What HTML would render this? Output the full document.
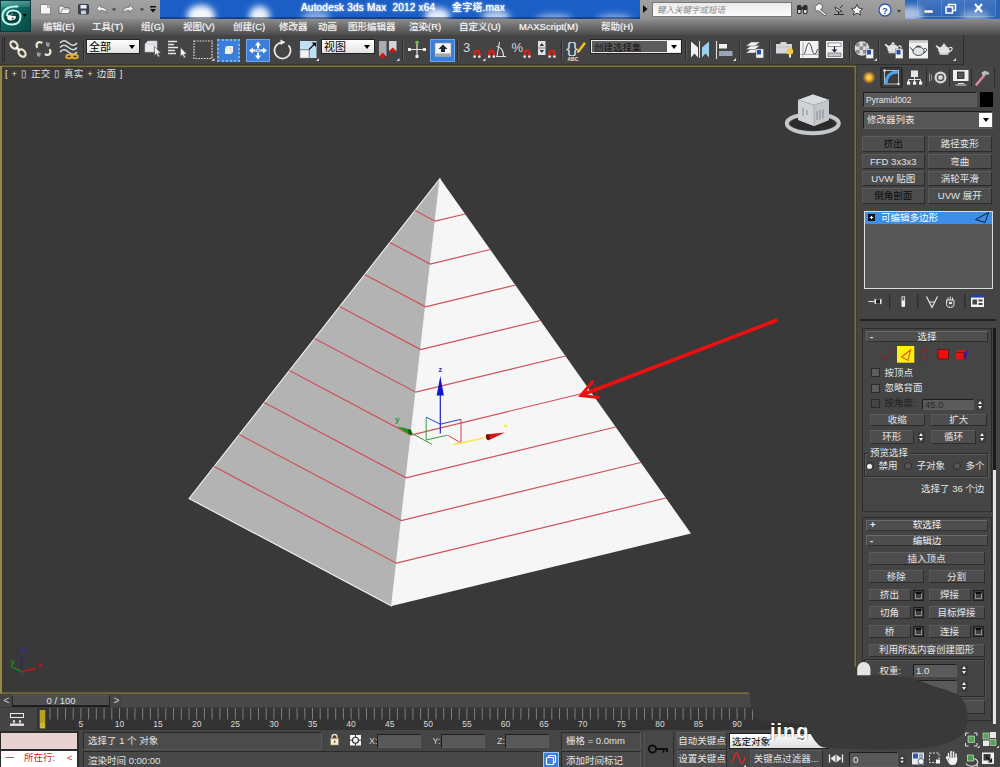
<!DOCTYPE html>
<html lang="zh-CN">
<head>
<meta charset="utf-8">
<title>Autodesk 3ds Max 2012 x64 - 金字塔.max</title>
<style>
*{box-sizing:border-box;margin:0;padding:0}
html,body{width:1000px;height:767px;overflow:hidden;background:#444}
body{position:relative;font-family:"Liberation Sans","Noto Sans CJK SC",sans-serif;font-size:11px;color:#dcdcdc;line-height:1}
.abs{position:absolute}
#app{position:absolute;left:0;top:0;width:1000px;height:767px;overflow:hidden;background:#444}
/* ---------- title ---------- */
#appbtn{left:0;top:0;width:31px;height:32px;background:linear-gradient(135deg,#1f8f89 0%,#0d6561 45%,#084843 100%);border:1px solid #0a3d3a;z-index:2}
#qat{left:31px;top:0;width:129px;height:19px;background:linear-gradient(#a2a2a2,#949494)}
#title{left:160px;top:0;width:480px;height:19px;background:#1b5fc6;overflow:hidden}
#info{left:640px;top:0;width:265px;height:19px;background:linear-gradient(#a0a0a0,#929292)}
#wctl{left:905px;top:0;width:95px;height:19px;background:#2a63b8;overflow:hidden}
.cloud{position:absolute;background:#fff;border-radius:50%;filter:blur(3px)}
#ttext,#ttext2{left:141px;top:3px;white-space:pre;color:#fff;font-size:10px;text-shadow:0 0 3px #cfe2ff,0 0 1px #fff;letter-spacing:.2px}
#ttext2{left:292px}
/* ---------- menu ---------- */
#menu{left:0;top:19px;width:1000px;height:16px;background:linear-gradient(#8d8d8d 0%,#6e6e6e 45%,#4d4d4d 100%)}
#menu span{position:absolute;top:3px;font-size:9.5px;color:#f0f0f0;white-space:nowrap;text-shadow:0 0 1px #ddd}
/* ---------- toolbar ---------- */
#tb{left:0;top:35px;width:964px;height:30px;background:#444;border-right:1px solid #2c2c2c;border-bottom:1px solid #2e2e2e}
.sep{position:absolute;top:6px;width:2px;height:19px;background:#2b2b2b;border-right:1px solid #5a5a5a}
.dd{position:absolute;height:15px;background:#fff;border:1px solid #222;color:#000;font-size:11px;padding:2px 2px 0;line-height:11px;white-space:nowrap;overflow:hidden}
.dd:after{content:"";position:absolute;right:4px;top:5px;border:3.5px solid transparent;border-top:4px solid #000}
.hl{position:absolute;background:#3b7fdb;border:1px solid #6ea6ee}
/* ---------- viewport ---------- */
#vp{left:0;top:65px;width:857px;height:629px;background:#393939;border:2px solid transparent;overflow:hidden}
/* ---------- right panel ---------- */
.btn{position:absolute;background:#4d4d4d;border:1px solid #2c2c2c;border-top-color:#5c5c5c;border-left-color:#585858;color:#e4e4e4;font-size:11px;text-align:center;white-space:nowrap;overflow:hidden}
.fld{position:absolute;background:#5a5a5a;border:1px solid #1e1e1e;border-right-color:#5e5e5e;border-bottom-color:#5e5e5e;color:#e4e4e4;font-size:11px;white-space:nowrap;overflow:hidden}
.hdr{position:absolute;background:#4e4e4e;border:1px solid #303030;border-top-color:#6a6a6a;border-left-color:#666;color:#eee;font-size:11px;text-align:center}
.lbl{position:absolute;white-space:nowrap;color:#e4e4e4;font-size:11px}
.spin{position:absolute;width:7px;height:11px;background:#3b3b3b}
.spin:before{content:"";position:absolute;left:1px;top:1.5px;border:2.5px solid transparent;border-bottom:3px solid #f0f0f0;border-top:0}
.spin:after{content:"";position:absolute;left:1px;bottom:1.5px;border:2.5px solid transparent;border-top:3px solid #f0f0f0;border-bottom:0}
.cb{position:absolute;width:9px;height:9px;background:#5e5e5e;border:1px solid #2a2a2a}
.rd{position:absolute;width:8px;height:8px;border-radius:50%;background:#555;border:1px solid #2a2a2a}
.sq{position:absolute;width:11px;height:11px;border:1px solid #1c1c1c;background:#3e3e3e}
.sq:after{content:"";position:absolute;left:1px;top:1px;right:1px;bottom:1px;border:1px solid #8a8a8a;border-top:2px solid #0c0c0c}
</style>
</head>
<body>
<div id="app">
<div id="appbtn" class="abs">
<div class="abs" style="left:0;top:0;width:29px;height:6px;background:linear-gradient(rgba(255,255,255,.28),rgba(255,255,255,.12))"></div>
<svg class="abs" style="left:-2px;top:-1px" width="31" height="32" viewBox="0 0 31 32"><ellipse cx="13" cy="17" rx="7" ry="6" fill="#083f3b"/><path d="M18.500 6.500C12 6 4 8 3.500 15.500 3 22 8 24.500 13 24.500c5.500 0 8.500-3 8.500-8 0-4-3.500-6-7.500-6-3.500 0-6 2-6 5" fill="none" stroke="#c9f5ef" stroke-width="2" stroke-linecap="round"/><ellipse cx="12.500" cy="17.300" rx="4.400" ry="3.100" fill="#f2fbfa" transform="rotate(-12 12.500 17.300)"/><ellipse cx="13.800" cy="14.300" rx="3.600" ry="1.700" fill="#0a4a46" transform="rotate(8 13.800 14.300)"/><circle cx="13" cy="14.100" r=".8" fill="#9fdcd5"/><circle cx="13.700" cy="18.400" r=".9" fill="#3a3a3a"/><path d="M23.500 14h4.500l-2.250 2.800z" fill="#000"/></svg>
</div>
<div id="qat" class="abs">
<svg width="129" height="19" viewBox="0 0 129 19">
<path d="M9.500 4.500h7l3 3v6.500h-10z" fill="#f4f4f4" stroke="#777" stroke-width=".8"/><path d="M16.500 4.500v3h3" fill="#ddd" stroke="#888" stroke-width=".6"/>
<path d="M28 6h4l1 1.500h5v6h-10z" fill="#e8e8e8" stroke="#666" stroke-width=".8"/><path d="M29.500 13.500l2-4.500h8l-2 4.500z" fill="#fafafa" stroke="#666" stroke-width=".7"/>
<rect x="47.500" y="4.500" width="10" height="9.500" rx="1" fill="#3c4657" stroke="#2a3140" stroke-width=".8"/><rect x="49.500" y="5" width="6" height="3.500" fill="#eef1f6"/><rect x="50" y="10.500" width="5" height="3.500" fill="#c9d0dc"/>
<path d="M65.500 8.500l4-3.500v2.200c4 0 6.500 2 6.500 6-1.200-2.300-3.200-3-6.500-3v2z" fill="#f1f1f1" stroke="#666" stroke-width=".7"/>
<path d="M81 8.500h4l-2 2.500z" fill="#333"/>
<path d="M102.500 8.500l-4-3.500v2.200c-4 0-6.500 2-6.500 6 1.200-2.300 3.200-3 6.500-3v2z" fill="#f1f1f1" stroke="#666" stroke-width=".7"/>
<path d="M109 8.500h4l-2 2.500z" fill="#333"/>
<rect x="119" y="6" width="6" height="1.500" fill="#111"/><path d="M119 9h6l-3 3.500z" fill="#111"/>
</svg>
</div>
<div id="title" class="abs">
<div class="cloud" style="left:27px;top:5px;width:28px;height:22px;opacity:.95"></div>
<div class="cloud" style="left:89px;top:6px;width:21px;height:20px;opacity:.92"></div>
<div class="cloud" style="left:142px;top:11px;width:28px;height:14px;opacity:.5"></div>
<div class="cloud" style="left:265px;top:8px;width:25px;height:16px;opacity:.9"></div>
<div class="cloud" style="left:322px;top:10px;width:28px;height:14px;opacity:.7"></div>
<div class="cloud" style="left:376px;top:14px;width:36px;height:10px;opacity:.5"></div>
<div class="cloud" style="left:437px;top:14px;width:35px;height:10px;opacity:.45"></div>
<div class="abs" style="left:0;top:17px;width:480px;height:2px;background:rgba(10,30,70,.45)"></div>
<div id="ttext" class="abs">Autodesk 3ds Max  2012 x64</div><div id="ttext2" class="abs">金字塔.max</div>
</div>
<div id="info" class="abs">
<svg class="abs" style="left:3px;top:5px" width="6" height="8"><path d="M0 0l4.500 4-4.500 4z" fill="#111"/></svg>
<div class="abs" style="left:12px;top:2px;width:140px;height:15px;background:linear-gradient(#e9e9e9,#fdfdfd);border:1px solid #777;color:#8a8a8a;font-size:8.500px;font-style:italic;padding:3px 4px;white-space:nowrap">键入关键字或短语</div>
<svg class="abs" style="left:154px;top:1px" width="111" height="18" viewBox="0 0 111 18">
<g fill="#2b2b2b"><rect x="3" y="4" width="4.500" height="9" rx="1.500"/><rect x="9" y="4" width="4.500" height="9" rx="1.500"/><rect x="6.500" y="6" width="3.500" height="2.500"/></g><rect x="4" y="9" width="2.500" height="3" fill="#ddd"/><rect x="10" y="9" width="2.500" height="3" fill="#ddd"/>
<path d="M23 4a3 3 0 1 1 3.500 4.500l6 5-1.500 1.500-6-5a3 3 0 0 1-2-6z" fill="#f4f4f4" stroke="#444" stroke-width=".8"/>
<path d="M40 13.500h10M45 13.500l-1-4M41 6a5 5 0 0 0 7 4.500zM46 7l3-3" fill="#eee" stroke="#333" stroke-width="1"/>
<path d="M63 3.500l1.700 3.600 3.900.4-2.900 2.700.8 3.900-3.500-2-3.500 2 .8-3.900-2.900-2.700 3.900-.4z" fill="#f5f5f5" stroke="#333" stroke-width=".9"/>
<circle cx="91" cy="9" r="6" fill="#fff" stroke="#2b58b0" stroke-width="1.300"/><text x="91" y="12.500" font-size="9.500" font-weight="bold" fill="#2b58b0" text-anchor="middle" font-family="Liberation Sans, sans-serif">?</text>
<path d="M103 9h4l-2 2.500z" fill="#333"/>
</svg>
</div>
<div id="wctl" class="abs">
<div class="cloud" style="left:-8px;top:6px;width:26px;height:16px;opacity:.6"></div>
<div class="cloud" style="left:55px;top:11px;width:30px;height:10px;opacity:.45"></div>
<div class="abs" style="left:12px;top:0;width:79px;height:17px;border:1px solid rgba(255,255,255,.15);border-top:0;border-radius:0 0 3px 3px;background:linear-gradient(rgba(255,255,255,.12),rgba(255,255,255,.02))"></div>
<div class="abs" style="left:36px;top:0;width:1px;height:16px;background:rgba(255,255,255,.15)"></div>
<div class="abs" style="left:59px;top:0;width:1px;height:16px;background:rgba(255,255,255,.15)"></div>
<svg class="abs" style="left:0;top:0" width="95" height="19" viewBox="0 0 95 19"><rect x="19" y="10" width="9" height="3" fill="#fff" stroke="#456" stroke-width=".5"/><rect x="43.500" y="4.500" width="7" height="6" fill="none" stroke="#fff" stroke-width="1.500"/><rect x="41" y="7" width="6.500" height="6" fill="#3c6cb4" stroke="#fff" stroke-width="1.500"/><path d="M70 4l7 8M77 4l-7 8" stroke="#fff" stroke-width="2.200"/></svg>
</div>

<div id="menu" class="abs">
<span style="left:43px">编辑(E)</span><span style="left:92px">工具(T)</span><span style="left:141px">组(G)</span><span style="left:183px">视图(V)</span><span style="left:233px">创建(C)</span><span style="left:279px">修改器</span><span style="left:318px">动画</span><span style="left:348px">图形编辑器</span><span style="left:409px">渲染(R)</span><span style="left:459px">自定义(U)</span><span style="left:519px">MAXScript(M)</span><span style="left:601px">帮助(H)</span>
</div>

<div id="tb" class="abs">
<div class="abs" style="left:2px;top:2px;width:1px;height:25px;background:#2a2a2a"></div><div class="abs" style="left:4px;top:2px;width:1px;height:25px;background:#2a2a2a"></div>
<div class="sep" style="left:83px"></div><div class="sep" style="left:402px"></div><div class="sep" style="left:457px"></div><div class="sep" style="left:561px"></div><div class="sep" style="left:685px"></div><div class="sep" style="left:739px"></div><div class="sep" style="left:769px"></div><div class="sep" style="left:849px"></div><div class="sep" style="left:878px"></div>
<div class="hl" style="left:217px;top:4px;width:23px;height:23px;border:2px dotted #7fb0f0"></div>
<div class="hl" style="left:246px;top:4px;width:24px;height:23px"></div>
<div class="hl" style="left:430px;top:4px;width:25px;height:23px"></div>
<div class="dd" style="left:86px;top:4px;width:54px;background:linear-gradient(#fff,#e2e2e2)">全部</div>
<div class="dd" style="left:321px;top:4px;width:54px;background:linear-gradient(#fff,#e2e2e2)">视图</div>
<div class="dd" style="left:590px;top:4px;width:92px;background:#5c5c5c;box-shadow:inset 0 0 0 1px #e8e8e8;color:#111;padding-left:3px;font-size:9.500px;padding-top:2px">创建选择集<div class="abs" style="right:1px;top:1px;width:13px;height:11px;background:#fff"></div></div>
<svg class="abs" style="left:0;top:0" width="963" height="30" viewBox="0 35 963 30">
<!-- link -->
<g fill="none" stroke="#ece6cb" stroke-width="2.200"><ellipse cx="14" cy="45" rx="3" ry="4.200" transform="rotate(-42 14 45)"/><ellipse cx="22" cy="53" rx="3" ry="4.200" transform="rotate(-42 22 53)"/></g><path d="M16 47l4 4" stroke="#fff" stroke-width="2"/>
<!-- unlink -->
<g fill="none" stroke="#ece6cb" stroke-width="2.200" stroke-linecap="round"><path d="M37 47c-1.500-3 1-6 4.500-4.500"/><path d="M50 50c1.500 3-1 6-4.500 4.500"/></g><path d="M46 42l4 1-1 4-3-1zM37 52l4 1-1 4-3-1z" fill="#999"/>
<!-- bind -->
<g fill="none" stroke="#d8dcdc" stroke-width="1.600"><path d="M60 43c2.500-3 5-3 8.500 0s6 3 8.500 0"/><path d="M60 47.500c2.500-3 5-3 8.500 0s6 3 8.500 0"/><path d="M60 52c2.500-3 5-3 8.500 0s6 3 8.500 0"/></g><g fill="none" stroke="#f0b21a" stroke-width="1.800"><ellipse cx="69" cy="56.500" rx="2.800" ry="1.800"/><ellipse cx="75" cy="56.500" rx="2.800" ry="1.800"/></g>
<!-- select object -->
<path d="M145 44l3-3h9v8l-3 3h-9z" fill="#e9e9f0" stroke="#bbb" stroke-width=".6"/><path d="M145 44h9v8M154 44l3-3" fill="none" stroke="#c8c8d4" stroke-width=".8"/><path d="M154.500 46.500v9l2-1.800 1.600 3.300 1.500-.7-1.600-3.200h2.800z" fill="#f2f2f2" stroke="#555" stroke-width=".6"/>
<!-- select by name -->
<g stroke="#e6e6e6" stroke-width="1.300"><path d="M168 41.500h9M168 44.500h6M168 47.500h10M168 50.500h7M168 53.500h8"/></g><path d="M180.500 47.500v9l2-1.800 1.600 3.300 1.500-.7-1.600-3.200h2.800z" fill="#f2f2f2" stroke="#555" stroke-width=".6"/>
<!-- rect region -->
<rect x="194" y="41" width="18" height="17.500" fill="none" stroke="#e4e4e4" stroke-width="1.200" stroke-dasharray="1.600 1.200"/><path d="M214.500 58l-3 3h3z" fill="#ddd"/>
<!-- window crossing -->
<path d="M225 48l2-2h6v6l-2 2h-6z" fill="#f1f1ea"/><path d="M225 48h6v6" fill="none" stroke="#cfcfc4" stroke-width=".7"/>
<!-- move -->
<g fill="#fff"><path d="M258 41.500l3 4h-2v2.500h-2v-2.500h-2z"/><path d="M258 59.500l3-4h-2v-2.500h-2v2.500h-2z"/><path d="M249 50.500l4-3v2h2.500v2H253v2z"/><path d="M267 50.500l-4-3v2h-2.500v2H263v2z"/></g><circle cx="258" cy="50.500" r="1.600" fill="none" stroke="#fff" stroke-width="1"/>
<!-- rotate -->
<path d="M282.500 42.500a8 8 0 1 0 6 2.700" fill="none" stroke="#ececec" stroke-width="1.700"/><path d="M280.500 39.500l5 2.800-5 2.800z" fill="#ececec"/>
<!-- scale -->
<rect x="300" y="41" width="16.500" height="17" fill="#bfe0f4"/><rect x="300" y="50" width="9" height="8" fill="#f4f4f4" stroke="#889" stroke-width=".6"/><path d="M300 49.500h9.500V58" fill="none" stroke="#7a8a98" stroke-width=".8"/><path d="M309 49.500l6-6" stroke="#111" stroke-width="1.300"/><path d="M316 42.500v4.500l-4.500-4.500z" fill="#111"/><path d="M319 58l-3 3h3z" fill="#ddd"/>
<!-- pivot -->
<rect x="379" y="41" width="7.500" height="15" fill="#a9adb3"/><rect x="389" y="41" width="7.500" height="10" fill="#d4d4d8"/><path d="M379 56.500l3.700-4 3.700 4-3.700 2z" fill="#d01818"/><path d="M389 51l3.700-3.500 3.700 3.500-3.700 2z" fill="#d01818"/><path d="M399.500 58l-3 3h3z" fill="#ddd"/>
<!-- manipulate -->
<path d="M409 49.500h16M417 42v15" stroke="#e6e6e6" stroke-width="1.200"/><rect x="408" y="48" width="3" height="3" fill="#f0f0f0"/><rect x="423" y="48" width="3" height="3" fill="#f0f0f0"/><rect x="415.500" y="55" width="3" height="3" fill="#f0f0f0"/><circle cx="417" cy="42.500" r="1.800" fill="#6cc24a"/>
<!-- kbd override -->
<rect x="435" y="43" width="16" height="13.500" fill="#f3f3f3" stroke="#889" stroke-width=".5"/><rect x="435.500" y="53.500" width="15" height="2.500" fill="#a6a6a6"/><path d="M443 44.500l4.500 4.500h-2.500v3h-4v-3h-2.500z" fill="#1d2a3a"/>
<!-- snaps -->
<text x="463" y="51.500" font-size="13" fill="#d6d6d6" font-family="Liberation Sans, sans-serif">3</text>
<g id="mag"><path d="M473.500 57.500v-4.500a3.500 3.500 0 0 1 7 0v4.500h-2.300v-4.500a1.200 1.200 0 0 0-2.400 0v4.500z" fill="#e01b1b"/><rect x="473.500" y="55.500" width="2.300" height="2.200" fill="#f1f1f1"/><rect x="478.200" y="55.500" width="2.300" height="2.200" fill="#f1f1f1"/></g><path d="M485.500 58l-3 3h3z" fill="#ddd"/>
<g transform="translate(14.500 0)"><path d="M473.500 57.500v-4.500a3.500 3.500 0 0 1 7 0v4.500h-2.300v-4.500a1.200 1.200 0 0 0-2.400 0v4.500z" fill="#e01b1b"/><rect x="473.500" y="55.500" width="2.300" height="2.200" fill="#f1f1f1"/><rect x="478.200" y="55.500" width="2.300" height="2.200" fill="#f1f1f1"/></g><path d="M496 56.500h10M497 56l2.500-14M496.500 46.500c4 0 7 4 7 9.500" fill="none" stroke="#e2e2e2" stroke-width="1.100"/>
<text x="511.500" y="51.500" font-size="13" fill="#d6d6d6" font-family="Liberation Sans, sans-serif">%</text><g transform="translate(50 0)"><path d="M473.500 57.500v-4.500a3.500 3.500 0 0 1 7 0v4.500h-2.300v-4.500a1.200 1.200 0 0 0-2.400 0v4.500z" fill="#e01b1b"/><rect x="473.500" y="55.500" width="2.300" height="2.200" fill="#f1f1f1"/><rect x="478.200" y="55.500" width="2.300" height="2.200" fill="#f1f1f1"/></g>
<rect x="538" y="41" width="7.500" height="14" fill="#dfe3e6"/><path d="M539.500 46l2.300-3 2.300 3zM539.500 50l2.300 3 2.300-3z" fill="#333"/><rect x="538" y="47.300" width="7.500" height="1.400" fill="#999"/><g transform="translate(75 0)"><path d="M473.500 57.500v-4.500a3.500 3.500 0 0 1 7 0v4.500h-2.300v-4.500a1.200 1.200 0 0 0-2.400 0v4.500z" fill="#e01b1b"/><rect x="473.500" y="55.500" width="2.300" height="2.200" fill="#f1f1f1"/><rect x="478.200" y="55.500" width="2.300" height="2.200" fill="#f1f1f1"/></g>
<!-- named sel -->
<text x="566" y="53" font-size="14" fill="#dedede" font-family="Liberation Sans, sans-serif" textLength="12" lengthAdjust="spacingAndGlyphs">{}</text><text x="567.500" y="60.500" font-size="5" font-weight="bold" fill="#e8e8e8" font-family="Liberation Sans, sans-serif">ABC</text><path d="M577 53l1-3 6-8 2 1.500-6 8z" fill="#f0c020"/><path d="M577 53l1-3 2 1.500z" fill="#f6e6b0"/>
<!-- mirror -->
<path d="M691 41.500l7 6v10l-3.500-4-3.500 4z" fill="#f1f1f1"/><path d="M699.500 41v17" stroke="#ddd" stroke-width="1"/><path d="M709 41.500l-7 6v10l3.500-4 3.500 4z" fill="#9dd0f2"/>
<!-- align -->
<path d="M716.500 41v18" stroke="#d8d8d8" stroke-width="1.200"/><rect x="719" y="44" width="8" height="4.500" fill="#f0f0f0"/><rect x="719" y="51" width="13.500" height="5" fill="#9aa6bb"/><path d="M736 58l-3 3h3z" fill="#ddd"/>
<!-- layers -->
<g fill="#f1f1f1" stroke="#555" stroke-width=".5"><path d="M746 53l5-4h9l-5 4z"/><path d="M746 49.500l5-4h9l-5 4z"/><path d="M746 46l5-4h9l-5 4z"/></g><rect x="756" y="49" width="7.500" height="9" fill="#f2f2f2" stroke="#666" stroke-width=".5"/><rect x="757" y="50" width="4" height="4.500" fill="#2b4fa8"/>
<!-- graphite -->
<path d="M776 44h4l1-2h5l1 2h5v9.500h-16z" fill="#d6d6dc"/><path d="M776 47h16" stroke="#bbb" stroke-width=".6"/><circle cx="790" cy="51.500" r="3.200" fill="#f6c93a"/><rect x="789" y="54.500" width="2" height="3" fill="#eee"/>
<!-- curve editor -->
<rect x="800" y="41" width="18.500" height="17" fill="#f2f2f2"/><path d="M803 42v15M800.500 54.500h17.500" stroke="#889" stroke-width=".7"/><path d="M804 54c2-1 2.500-11 5-11s3 11 5.500 11 2-4 3.500-5" fill="none" stroke="#445" stroke-width="1"/>
<!-- schematic -->
<rect x="826" y="41" width="17" height="17" fill="#f0f0f0"/><rect x="828" y="43" width="13" height="3.500" fill="#fff" stroke="#667" stroke-width=".7"/><rect x="828" y="53" width="13" height="3.500" fill="#c5c5c5" stroke="#667" stroke-width=".7"/><path d="M834.500 46.500v3.500" stroke="#223" stroke-width="1.200"/><path d="M831.500 49.500h6l-3 3z" fill="#223"/>
<!-- material -->
<circle cx="862" cy="48.500" r="7.300" fill="#d9d9d9"/><g fill="#8a8a8a"><rect x="856" y="43" width="3.500" height="3.500"/><rect x="863" y="43" width="3.500" height="3.500"/><rect x="859.500" y="46.500" width="3.500" height="3.500"/><rect x="856" y="50" width="3.500" height="3.500"/><rect x="863" y="50" width="3.500" height="3.500"/></g><rect x="866" y="49" width="7.500" height="9.500" fill="#f2f2f2" stroke="#666" stroke-width=".5"/><rect x="867" y="50" width="4" height="4.500" fill="#2b4fa8"/><path d="M877 58l-3 3h3z" fill="#ddd"/>
<!-- render setup -->
<g id="tp"><ellipse cx="893" cy="48.700" rx="5.600" ry="4.300" fill="#e4e4e4"/><rect x="888.500" y="51.500" width="9" height="1.800" fill="#d0d0d0"/><path d="M888 48.500l-3.500-4 1.200-.8 3.800 2.800z" fill="#e4e4e4"/><path d="M898.200 46.500c2.600-1.600 3.800.6 2.400 2.300l-2.600 2" fill="none" stroke="#e4e4e4" stroke-width="1.100"/><path d="M890.800 44.600h4.400l-.8-1.300h-2.800zM892.300 43.300h1.400v-1.200h-1.400z" fill="#e4e4e4"/></g><rect x="895.500" y="49" width="7.500" height="9.500" fill="#f2f2f2" stroke="#666" stroke-width=".5"/><rect x="896.500" y="50" width="4" height="4.500" fill="#2b4fa8"/>
<!-- frame window -->
<rect x="909" y="40.500" width="19" height="18" fill="#f1f1f1"/><rect x="909" y="40.500" width="19" height="2.500" fill="#d0d0d0"/><g transform="translate(25.500 2.500)"><ellipse cx="893" cy="48.700" rx="5.600" ry="4.300" fill="#dfe3e6" stroke="#334" stroke-width=".9"/><path d="M888 48.500l-3.500-3.800M898.200 46.500c2.600-1.600 3.800.6 2.400 2.300l-2.600 2" fill="none" stroke="#334" stroke-width="1"/><path d="M890.800 44.400h4.400v-1.200h-4.400z" fill="#334"/></g>
<!-- render -->
<g transform="translate(51 1.500)"><ellipse cx="893" cy="48.700" rx="5.600" ry="4.300" fill="#e4e4e4"/><rect x="888.500" y="51.500" width="9" height="1.800" fill="#d0d0d0"/><path d="M888 48.500l-3.500-4 1.200-.8 3.800 2.800z" fill="#e4e4e4"/><path d="M898.200 46.500c2.600-1.600 3.800.6 2.400 2.300l-2.600 2" fill="none" stroke="#e4e4e4" stroke-width="1.100"/><path d="M890.800 44.600h4.400l-.8-1.300h-2.800zM892.300 43.300h1.400v-1.200h-1.400z" fill="#e4e4e4"/></g><path d="M956 58l-3 3h3z" fill="#ddd"/>
</svg>
</div>

<div id="vp" class="abs">
<svg class="abs" style="left:0;top:0" width="853" height="625" viewBox="2 67 853 625">
<defs><linearGradient id="lf" x1="0" y1="0" x2="0" y2="1"><stop offset="0" stop-color="#b0b0b0"/><stop offset="1" stop-color="#bcbcbc"/></linearGradient></defs>
<path d="M440 178.5L189 498.5L391.6 606z" fill="#b3b3b3" stroke="#f4f4f4" stroke-width="1.100" stroke-linejoin="round"/>
<path d="M440 178.5L391.6 606L691 533.5z" fill="#f6f6f6"/>
<path d="M414.9 210.5L435.2 221.2L465.1 214.0M389.8 242.5L430.3 264.0L490.2 249.5M364.7 274.5L425.5 306.8L515.3 285.0M339.6 306.5L420.6 349.5L540.4 320.5M314.5 338.5L415.8 392.2L565.5 356.0M289.4 370.5L411.0 435.0L590.6 391.5M264.3 402.5L406.1 477.8L615.7 427.0M239.2 434.5L401.3 520.5L640.8 462.5M214.1 466.5L396.4 563.2L665.9 498.0" fill="none" stroke="#cf5058" stroke-width="1.200"/>
<!-- gizmo -->
<path d="M411.500 433.200L431.700 444.200" stroke="#2f9a2f" stroke-width="1"/>
<path d="M426.200 417.200V440L446 435.500" fill="none" stroke="#3a9a3a" stroke-width="1"/>
<path d="M446 435.500h2.200" stroke="#999" stroke-width="1"/>
<path d="M426.200 417.200L440.300 424.200L461 419.300" fill="none" stroke="#2a3fd0" stroke-width="1"/>
<path d="M461 419.300V443L448.200 435.500" fill="none" stroke="#e03a3a" stroke-width="1"/>
<path d="M453.500 444.500L461 443L485.500 437.700" fill="none" stroke="#f4e84a" stroke-width="1.300"/>
<path d="M440.300 395V433.500" stroke="#1c28c8" stroke-width="1.200"/>
<path d="M440.300 376l3.600 19.500h-7.200z" fill="#1418c8"/>
<path d="M397 426.200l13.600 3.200-1.400 5.200z" fill="#169a16"/><ellipse cx="410" cy="432" rx="1.800" ry="2.800" fill="#0b5e0b" transform="rotate(-20 410 432)"/>
<path d="M505 432.400l-17.600 1.800 1.200 6z" fill="#d81414"/><ellipse cx="487.800" cy="437.200" rx="1.800" ry="3" fill="#7a0a0a" transform="rotate(-12 487.800 437.200)"/>
<text x="438.500" y="371.500" font-size="7" font-weight="bold" fill="#2a32c8" font-family="Liberation Sans, sans-serif">z</text>
<text x="395" y="421.500" font-size="8" font-weight="bold" fill="#2a9a2a" font-family="Liberation Sans, sans-serif">y</text>
<circle cx="505.700" cy="426" r="1.700" fill="#f2ee5a"/>
<!-- annotation arrow -->
<path d="M776 320.500L583 394.500" stroke="#ee1010" stroke-width="3.600" stroke-linecap="round"/>
<path d="M592.500 381.500L581 395.500L598.500 397.500" fill="none" stroke="#ee1010" stroke-width="3" stroke-linejoin="miter" stroke-linecap="round"/><path d="M592.500 381.500L598.500 397.500" stroke="#ee1010" stroke-width="1.200" opacity=".7"/>
<!-- viewcube -->
<ellipse cx="812.800" cy="123.600" rx="26" ry="9.700" fill="none" stroke="#c4c8cb" stroke-width="4"/>
<ellipse cx="812.800" cy="123.600" rx="22" ry="7" fill="#2b2b2b"/>
<path d="M798 100l15-5.500 16 5.500v20l-15 6-15-6z" fill="#c9cdd1"/>
<path d="M798 100l15-5.500 16 5.500-15 5z" fill="#d9dcdf"/><path d="M814 105v21l15-6v-20z" fill="#c3c7cb"/><path d="M798 100l16 5v21l-16-6z" fill="#cfd3d6"/>
<path d="M798 100l16 5 15-5M814 105v21" fill="none" stroke="#9a9ea3" stroke-width=".7"/>
<path d="M817 111v9M820 110v9.500M823 109.500v9M803 108v8M807 110v5" stroke="#7f858c" stroke-width=".9"/>
<!-- tripod -->
<path d="M21.600 671.400V656" stroke="#1c22c0" stroke-width="1.300"/><path d="M21.600 671.400L36 668.500" stroke="#d01414" stroke-width="1.300"/><path d="M21.600 671.400L11 666.500" stroke="#1f8a1f" stroke-width="1.300"/><path d="M21.600 671.400l1 4" stroke="#2a6a2a" stroke-width="1"/>
<text x="22" y="652" font-size="8" font-weight="bold" fill="#2a2ec0" font-family="Liberation Sans, sans-serif">z</text>
<text x="37.500" y="666.500" font-size="8" font-weight="bold" fill="#c81414" font-family="Liberation Sans, sans-serif">x</text>
<text x="10.500" y="663.500" font-size="8" font-weight="bold" fill="#228a22" font-family="Liberation Sans, sans-serif">y</text>
</svg>
<div id="vlabel" class="abs" style="left:3px;top:2px;font-size:9.500px;color:#e2e2e2;white-space:pre;letter-spacing:.2px;word-spacing:.9px">[ + ▯ 正交 ▯ 真实 + 边面 ]</div>
</div>

<svg class="abs" style="left:0;top:62px;width:860px;height:636px" viewBox="0 62 860 636">
<rect x="1" y="66.300" width="854.300" height="626.800" fill="none" stroke="#423d28" stroke-width="4.200" opacity=".85"/>
<rect x="1" y="66.300" width="854.300" height="626.800" fill="none" stroke="#80764d" stroke-width="1.300"/>
<path d="M1 66v627.500" stroke="#96884a" stroke-width="2"/>
</svg>
<!--PANEL_START-->
<div class="abs" style="left:857px;top:65px;width:143px;height:702px;background:#444"></div>
<div class="abs" style="left:859px;top:67px;width:136px;height:21px;background:#464646"></div>
<div class="abs" style="left:880px;top:68px;width:1px;height:19px;background:#2c2c2c"></div>
<div class="abs" style="left:902px;top:68px;width:1px;height:19px;background:#2c2c2c"></div>
<div class="abs" style="left:925.5px;top:68px;width:1px;height:19px;background:#2c2c2c"></div>
<div class="abs" style="left:948.5px;top:68px;width:1px;height:19px;background:#2c2c2c"></div>
<div class="abs" style="left:970.5px;top:68px;width:1px;height:19px;background:#2c2c2c"></div>
<div class="abs" style="left:993.5px;top:68px;width:1px;height:19px;background:#2c2c2c"></div>
<div class="abs" style="left:881px;top:67px;width:21px;height:21px;background:#3c3c3c;border:1px solid #2a2a2a"></div>
<svg class="abs" style="left:857px;top:65px" width="143" height="26" viewBox="857 65 143 26">
<defs><radialGradient id="sun"><stop offset="0" stop-color="#fff2a0"/><stop offset=".45" stop-color="#f5a623"/><stop offset="1" stop-color="#f5a623" stop-opacity="0"/></radialGradient></defs>
<circle cx="869" cy="77.500" r="6.500" fill="url(#sun)"/>
<rect x="884.500" y="70.500" width="14" height="13.500" fill="none" stroke="#e0e0e0" stroke-width=".8"/><path d="M886 84c0-7 4-12 12-12" fill="none" stroke="#4aa3ee" stroke-width="3.200"/><rect x="883.500" y="69.500" width="2" height="2" fill="#f0f0f0"/><rect x="897.500" y="83" width="2" height="2" fill="#f0f0f0"/>
<rect x="911" y="70.500" width="7" height="6.500" fill="#e8e8e8"/><path d="M914.500 77v2.500M908.500 82v-2.500h12V82M914.500 79.500V82" fill="none" stroke="#e0e0e0" stroke-width="1"/><rect x="907" y="81.500" width="3.200" height="3.200" fill="#f2f2f2"/><rect x="913" y="81.500" width="3.200" height="3.200" fill="#f2f2f2"/><rect x="919" y="81.500" width="3.200" height="3.200" fill="#f2f2f2"/>
<circle cx="940.500" cy="77.500" r="6" fill="#d6d6d6"/><circle cx="940.500" cy="77.500" r="3.800" fill="#555"/><circle cx="940.500" cy="77.500" r="2.300" fill="#e0e0e0"/><path d="M929.500 73.500v8M931.500 74.500v6" stroke="#b0b0b0" stroke-width=".7"/>
<rect x="953" y="70" width="15.500" height="11" fill="#f0f0f0"/><rect x="957.500" y="72" width="6.500" height="6.500" fill="#555" stroke="#222" stroke-width=".8"/><path d="M958 83.500h6M955.500 85h11" stroke="#ddd" stroke-width="1"/>
<path d="M976.500 84.500l8-9.500" stroke="#d8899a" stroke-width="2.600" stroke-linecap="round"/><path d="M981.500 72.500c3-2.500 6-2 8 1l-2 1.500c-1-1-2-1-3 0l-1.500 1.200z" fill="#b8c0c4"/>
</svg>
<div class="fld" style="left:863px;top:92px;width:114px;height:15px;padding:2px 2px;font-size:8.500px;line-height:10px">Pyramid002</div>
<div class="abs" style="left:980px;top:92px;width:13px;height:15px;background:#000"></div>
<div class="fld" style="left:863px;top:111px;width:130px;height:18px;padding:3px 3px;font-size:9.500px;background:#575757">修改器列表<div class="abs" style="right:0;top:1px;width:13px;height:14px;background:#fff"></div><div class="abs" style="right:3px;top:6px;border:3.500px solid transparent;border-top:4px solid #000"></div></div>
<div class="btn" style="left:861.5px;top:136px;width:63.5px;height:15.5px;line-height:13.5px;font-size:9.5px;color:#0c0c0c;">挤出</div>
<div class="btn" style="left:927.5px;top:136px;width:64.5px;height:15.5px;line-height:13.5px;font-size:9.5px;">路径变形</div>
<div class="btn" style="left:861.5px;top:153.5px;width:63.5px;height:15.5px;line-height:13.5px;font-size:9.5px;">FFD 3x3x3</div>
<div class="btn" style="left:927.5px;top:153.5px;width:64.5px;height:15.5px;line-height:13.5px;font-size:9.5px;">弯曲</div>
<div class="btn" style="left:861.5px;top:170.5px;width:63.5px;height:15.5px;line-height:13.5px;font-size:9.5px;">UVW 贴图</div>
<div class="btn" style="left:927.5px;top:170.5px;width:64.5px;height:15.5px;line-height:13.5px;font-size:9.5px;">涡轮平滑</div>
<div class="btn" style="left:861.5px;top:188px;width:63.5px;height:15.5px;line-height:13.5px;font-size:9.5px;color:#0c0c0c;">倒角剖面</div>
<div class="btn" style="left:927.5px;top:188px;width:64.5px;height:15.5px;line-height:13.5px;font-size:9.5px;">UVW 展开</div>
<div class="abs" style="left:863.500px;top:210.500px;width:129px;height:78px;background:#565656;border:1px solid #dcdcdc"></div>
<div class="abs" style="left:864.500px;top:211.500px;width:127px;height:12.500px;background:#3c8ee8"></div>
<div class="abs" style="left:867.500px;top:214px;width:7px;height:7px;background:#152033;border:1px solid #0a0a0a"></div><div class="abs" style="left:869.500px;top:217px;width:3px;height:1px;background:#fff"></div><div class="abs" style="left:870.500px;top:216px;width:1px;height:3px;background:#fff"></div>
<div class="lbl" style="left:881px;top:213px;color:#fff;font-size:9.500px">可编辑多边形</div>
<svg class="abs" style="left:974px;top:211px" width="17" height="13" viewBox="0 0 17 13"><path d="M1.500 8.500L14.500 1.500L11 11.500z" fill="none" stroke="#0c1830" stroke-width="1"/></svg>
<svg class="abs" style="left:857px;top:290px" width="143" height="24" viewBox="857 290 143 24">
<path d="M889.700 294v15M917.700 294v15M964.800 294v15" stroke="#2a2a2a" stroke-width="1.200"/>
<path d="M868.500 301.500h6" stroke="#e8e8e8" stroke-width="1"/><path d="M874.500 298.500l1.500 1h4l1.500-1v6l-1.500-1h-4l-1.500 1z" fill="#f0f0f0"/><rect x="876" y="299.500" width="4" height="4" fill="#222"/>
<rect x="901.500" y="296" width="3.600" height="11" rx="1.200" fill="#f2f2f2"/><rect x="902.300" y="296.500" width="2" height="4" fill="#666"/>
<path d="M926.500 296.500l5.500 11 5.500-11M929 302h6" fill="none" stroke="#e6e6e6" stroke-width="1.200"/>
<path d="M946.500 300h7.500v4.500c0 2-1.500 3-3.700 3s-3.800-1-3.800-3z" fill="#555" stroke="#e0e0e0" stroke-width="1"/><path d="M948 300v-2.500M950.300 300v-3.500M952.500 300v-2.500" stroke="#e0e0e0" stroke-width="1"/><rect x="949" y="302" width="3" height="2" fill="#e0e0e0"/>
<rect x="971" y="295" width="13" height="12" fill="#f4f4f4"/><rect x="971" y="295" width="13" height="2.600" fill="#2540b8"/><rect x="972.500" y="299.500" width="4.500" height="5" fill="#444"/><rect x="978.500" y="299.500" width="4" height="2" fill="#444"/><rect x="978.500" y="303" width="4" height="2" fill="#444"/>
</svg>
<div class="abs" style="left:860px;top:319px;width:136px;height:2px;background:#242424"></div>
<div class="abs" style="left:861.500px;top:327.500px;width:130px;height:184.500px;border:1px solid #2c2c2c;border-right-color:#2a2a2a;border-bottom-color:#303030;background:#454545"></div>
<div class="hdr" style="left:866px;top:330.5px;width:122px;height:11.5px;line-height:9.5px;font-size:9.500px">选择<div class="abs" style="left:3px;top:0;font-weight:bold">-</div></div>
<svg class="abs" style="left:857px;top:344px" width="143" height="22" viewBox="857 344 143 22">
<g fill="#8c2222"><circle cx="882" cy="356" r="1.300"/><circle cx="885.500" cy="359.500" r="1.300"/><circle cx="890" cy="351.500" r="1.300"/></g><path d="M882 356l3.500 3.500 4.500-8" fill="none" stroke="#6a2626" stroke-width=".6"/>
<rect x="897" y="346" width="17.300" height="16.700" fill="#ffee14"/><path d="M901.500 357l9-7-2.500 10.500z" fill="none" stroke="#e05a10" stroke-width="1.100"/>
<ellipse cx="924.300" cy="354.500" rx="3.200" ry="5.500" fill="none" stroke="#8a2424" stroke-width="1.300"/>
<rect x="938" y="349.500" width="10.300" height="9.500" fill="#f20d0d" stroke="#3a0a0a" stroke-width=".6"/>
<path d="M956 352.500l3-2.500h8v7l-3 2.500h-8z" fill="#e51212"/><path d="M964 352.500l3-2.500v7l-3 2.500z" fill="#3a1a9a"/><path d="M956 352.500h8v7" fill="none" stroke="#5a0a0a" stroke-width=".6"/>
</svg>
<div class="cb" style="left:870.500px;top:368px;background:#5c5c5c"></div>
<div class="lbl" style="left:884.5px;top:367.5px;font-size:9.500px">按顶点</div>
<div class="cb" style="left:870.500px;top:383.5px;background:#5c5c5c"></div>
<div class="lbl" style="left:884.5px;top:383.0px;font-size:9.500px">忽略背面</div>
<div class="cb" style="left:870.500px;top:398.7px;background:#454545"></div>
<div class="lbl" style="left:884.5px;top:398.2px;font-size:9.500px;color:#222">按角度:</div>
<div class="fld" style="left:922px;top:398.500px;width:52px;height:11.500px;font-size:9.500px;padding:0 2px;color:#2a2a2a;line-height:10px">45.0</div>
<div class="spin" style="left:976.500px;top:399px"></div>
<div class="btn" style="left:869.5px;top:413.5px;width:55.5px;height:12.5px;line-height:10.5px;font-size:9.5px;">收缩</div>
<div class="btn" style="left:931px;top:413.5px;width:55.5px;height:12.5px;line-height:10.5px;font-size:9.5px;">扩大</div>
<div class="btn" style="left:869.5px;top:430px;width:44.5px;height:13.5px;line-height:11.5px;font-size:9.5px;">环形</div>
<div class="spin" style="left:918px;top:431.500px"></div>
<div class="btn" style="left:931px;top:430px;width:45px;height:13.5px;line-height:11.5px;font-size:9.5px;">循环</div>
<div class="spin" style="left:979px;top:431.500px"></div>
<div class="abs" style="left:864px;top:452.500px;width:124px;height:24px;border:1px solid #2e2e2e;box-shadow:inset 1px 1px 0 #5a5a5a,1px 1px 0 #5a5a5a"></div>
<div class="lbl" style="left:868px;top:447.5px;font-size:9.500px;background:#454545;padding:0 2px">预览选择</div>
<div class="rd" style="left:865.5px;top:462px"><div class="abs" style="left:.5px;top:.5px;width:5px;height:5px;border-radius:50%;background:#f4f4f4"></div></div>
<div class="lbl" style="left:878.5px;top:461px;font-size:9.500px">禁用</div>
<div class="rd" style="left:903.5px;top:462px"></div>
<div class="lbl" style="left:916.5px;top:461px;font-size:9.500px">子对象</div>
<div class="rd" style="left:952.5px;top:462px"></div>
<div class="lbl" style="left:965.5px;top:461px;font-size:9.500px">多个</div>
<div class="lbl" style="left:921px;top:484px;font-size:9.500px">选择了 36 个边</div>
<div class="hdr" style="left:866px;top:520px;width:122px;height:10.5px;line-height:8.5px;font-size:9.500px">软选择<div class="abs" style="left:3px;top:0;font-weight:bold">+</div></div>
<div class="hdr" style="left:866px;top:534.5px;width:122px;height:11px;line-height:9px;font-size:9.500px">编辑边<div class="abs" style="left:3px;top:0;font-weight:bold">-</div></div>
<div class="abs" style="left:861.500px;top:516.500px;width:130px;height:16px;border:1px solid #2c2c2c;border-bottom:0"></div>
<div class="abs" style="left:861.500px;top:532.500px;width:130px;height:188.500px;border:1px solid #2c2c2c;border-top:0"></div>
<div class="btn" style="left:868.5px;top:552px;width:116px;height:13px;line-height:11px;font-size:9.5px;">插入顶点</div>
<div class="btn" style="left:868.5px;top:569.5px;width:55.5px;height:13.5px;line-height:11.5px;font-size:9.5px;">移除</div>
<div class="btn" style="left:928.5px;top:569.5px;width:56px;height:13.5px;line-height:11.5px;font-size:9.5px;">分割</div>
<div class="btn" style="left:868.5px;top:588.5px;width:42px;height:12.5px;line-height:10.5px;font-size:9.5px;">挤出</div>
<div class="sq" style="left:913px;top:589.500px"></div>
<div class="btn" style="left:928.5px;top:588.5px;width:42px;height:12.5px;line-height:10.5px;font-size:9.5px;">焊接</div>
<div class="sq" style="left:973px;top:589.500px"></div>
<div class="btn" style="left:868.5px;top:606px;width:42px;height:13px;line-height:11px;font-size:9.5px;">切角</div>
<div class="sq" style="left:913px;top:607px"></div>
<div class="btn" style="left:928.5px;top:606px;width:56px;height:13px;line-height:11px;font-size:9.5px;">目标焊接</div>
<div class="btn" style="left:868.5px;top:625px;width:42px;height:13px;line-height:11px;font-size:9.5px;">桥</div>
<div class="sq" style="left:913px;top:626px"></div>
<div class="btn" style="left:928.5px;top:625px;width:42px;height:13px;line-height:11px;font-size:9.5px;">连接</div>
<div class="sq" style="left:973px;top:626px"></div>
<div class="btn" style="left:868.5px;top:644px;width:116px;height:12.5px;line-height:10.5px;font-size:9.5px;">利用所选内容创建图形</div>
<div class="abs" style="left:863.500px;top:658.500px;width:121px;height:38.500px;border:1px solid #2a2a2a;box-shadow:inset 1px 1px 0 #525252,1px 1px 0 #525252"></div>
<div class="lbl" style="left:879.5px;top:665.5px;font-size:9.500px">权重:</div>
<div class="fld" style="left:913px;top:664px;width:44px;height:12.500px;font-size:9.500px;padding:0 2px;line-height:11px">1.0</div>
<div class="spin" style="left:960.500px;top:664.500px"></div>
<div class="fld" style="left:913px;top:680px;width:44px;height:12.500px"></div>
<div class="spin" style="left:960.500px;top:680.500px"></div>
<div class="btn" style="left:928.5px;top:700px;width:56.5px;height:14px;line-height:12px;font-size:9.5px;"></div>
<div class="abs" style="left:992.500px;top:328px;width:3.500px;height:395.500px;background:#1a1a1a"></div>
<div class="abs" style="left:992.500px;top:469.500px;width:3.500px;height:254px;background:#e4e4e4"></div>
<!--PANEL_END-->
<!--BOTTOM_START-->
<div class="abs" style="left:0;top:694px;width:857px;height:14px;background:#454545"></div>
<div class="abs" style="left:122px;top:694px;width:735px;height:14px;background:#484848"></div>
<div class="abs" style="left:12px;top:694.500px;width:98px;height:12.500px;background:#4e4e4e;border:1px solid #262626;border-top-color:#555;border-bottom:2px solid #1e1e1e;color:#e2e2e2;font-size:9.500px;text-align:center;line-height:10px">0 / 100</div>
<div class="lbl" style="left:3.5px;top:695.5px;font-size:10px;color:#cfcfcf">&lt;</div>
<div class="lbl" style="left:113.5px;top:695.5px;font-size:10px;color:#cfcfcf">&gt;</div>
<div class="abs" style="left:0;top:706.500px;width:857px;height:23.500px;background:#444;border-top:1px solid #3a3a3a"></div>
<div class="abs" style="left:37px;top:707px;width:820px;height:22.500px;background:linear-gradient(#3e3e3e 0,#353535 2px,#323232 100%)"></div>
<svg class="abs" style="left:0;top:708px" width="857" height="23" viewBox="0 708 857 23">
<path d="M50.0 707.500v12M57.7 707.500v12M65.5 707.500v12M73.2 707.500v12M80.9 707.500v12M88.6 707.500v12M96.3 707.500v12M104.1 707.500v12M111.8 707.500v12M119.5 707.500v12M127.2 707.500v12M134.9 707.500v12M142.7 707.500v12M150.4 707.500v12M158.1 707.500v12M165.8 707.500v12M173.5 707.500v12M181.3 707.500v12M189.0 707.500v12M196.7 707.500v12M204.4 707.500v12M212.1 707.500v12M219.9 707.500v12M227.6 707.500v12M235.3 707.500v12M243.0 707.500v12M250.7 707.500v12M258.5 707.500v12M266.2 707.500v12M273.9 707.500v12M281.6 707.500v12M289.3 707.500v12M297.1 707.500v12M304.8 707.500v12M312.5 707.500v12M320.2 707.500v12M327.9 707.500v12M335.7 707.500v12M343.4 707.500v12M351.1 707.500v12M358.8 707.500v12M366.5 707.500v12M374.3 707.500v12M382.0 707.500v12M389.7 707.500v12M397.4 707.500v12M405.1 707.500v12M412.9 707.500v12M420.6 707.500v12M428.3 707.500v12M436.0 707.500v12M443.7 707.500v12M451.5 707.500v12M459.2 707.500v12M466.9 707.500v12M474.6 707.500v12M482.3 707.500v12M490.1 707.500v12M497.8 707.500v12M505.5 707.500v12M513.2 707.500v12M520.9 707.500v12M528.7 707.500v12M536.4 707.500v12M544.1 707.500v12M551.8 707.500v12M559.5 707.500v12M567.3 707.500v12M575.0 707.500v12M582.7 707.500v12M590.4 707.500v12M598.1 707.500v12M605.9 707.500v12M613.6 707.500v12M621.3 707.500v12M629.0 707.500v12M636.7 707.500v12M644.5 707.500v12M652.2 707.500v12M659.9 707.500v12M667.6 707.500v12M675.3 707.500v12M683.1 707.500v12M690.8 707.500v12M698.5 707.500v12M706.2 707.500v12M713.9 707.500v12M721.7 707.500v12M729.4 707.500v12M737.1 707.500v12M744.8 707.500v12M752.5 707.500v12M760.3 707.500v12M768.0 707.500v12M775.7 707.500v12M783.4 707.500v12M791.1 707.500v12M798.9 707.500v12M806.6 707.500v12M814.3 707.500v12M822.0 707.500v12M829.7 707.500v12M837.5 707.500v12M845.2 707.500v12M852.9 707.500v12" stroke="#7e7e7e" stroke-width="1"/>
<g font-size="8.500" fill="#dadada" font-family="Liberation Sans, sans-serif"><text x="80.9" y="727.300" text-anchor="middle">5</text><text x="119.5" y="727.300" text-anchor="middle">10</text><text x="158.1" y="727.300" text-anchor="middle">15</text><text x="196.7" y="727.300" text-anchor="middle">20</text><text x="235.3" y="727.300" text-anchor="middle">25</text><text x="273.9" y="727.300" text-anchor="middle">30</text><text x="312.5" y="727.300" text-anchor="middle">35</text><text x="351.1" y="727.300" text-anchor="middle">40</text><text x="389.7" y="727.300" text-anchor="middle">45</text><text x="428.3" y="727.300" text-anchor="middle">50</text><text x="466.9" y="727.300" text-anchor="middle">55</text><text x="505.5" y="727.300" text-anchor="middle">60</text><text x="544.1" y="727.300" text-anchor="middle">65</text><text x="582.7" y="727.300" text-anchor="middle">70</text><text x="621.3" y="727.300" text-anchor="middle">75</text><text x="659.9" y="727.300" text-anchor="middle">80</text><text x="698.5" y="727.300" text-anchor="middle">85</text><text x="737.1" y="727.300" text-anchor="middle">90</text></g>
<rect x="39.700" y="710" width="5.600" height="18.500" fill="#b8a21c"/><text x="42.500" y="727.500" text-anchor="middle" font-size="8" fill="#f2e27a" font-family="Liberation Sans, sans-serif">0</text>
<g fill="none" stroke="#ececec" stroke-width="1"><rect x="10.500" y="713.500" width="13" height="4"/><path d="M10 725h14M14 720v4M20 720v4"/></g><path d="M12.500 722h3l-1.500-2zM18.500 722h3l-1.500-2z" fill="#ececec"/><rect x="10" y="723.500" width="14" height="2.500" fill="#d8d8d8"/>
</svg>
<div class="abs" style="left:0;top:729.500px;width:1000px;height:38px;background:#454545"></div>
<div class="abs" style="left:0;top:731px;width:79px;height:36px;background:#2c2c2c"></div>
<div class="abs" style="left:1px;top:732.500px;width:76px;height:16.500px;background:#e8d2d2"></div>
<div class="abs" style="left:1px;top:750.500px;width:76px;height:17px;background:#fff;color:#e01818;font-size:9.500px;white-space:pre;padding:2px 0 0 4px">一<span style="position:absolute;left:23px">所在行:</span><span style="position:absolute;left:66px">&lt;</span></div>
<div class="abs" style="left:83px;top:732px;width:239px;height:18px;background:#4b4b4b;border:1px solid #2b2b2b;border-right-color:#5a5a5a;border-bottom-color:#5a5a5a"></div>
<div class="lbl" style="left:88px;top:736px;font-size:9.500px">选择了 1 个 对象</div>
<div class="abs" style="left:83px;top:751px;width:458px;height:17px;background:#484848;border-top:1px solid #2b2b2b;border-left:1px solid #2b2b2b"></div>
<div class="lbl" style="left:88px;top:755.5px;font-size:9.500px">渲染时间  0:00:00</div>
<svg class="abs" style="left:326px;top:732px" width="40" height="17" viewBox="326 732 40 17">
<path d="M332 738.500v-1.500a2.500 2.500 0 0 1 5 0v1.500" fill="none" stroke="#e8dcc0" stroke-width="1.300"/><rect x="330.700" y="738.500" width="7.800" height="6.500" fill="#f2ead6" stroke="#a08a5a" stroke-width=".5"/><rect x="334" y="740.500" width="1.300" height="2.500" fill="#7a5a2a"/>
<rect x="350" y="735" width="11" height="10.500" fill="#f4f4f4"/><circle cx="355.500" cy="740.200" r="3" fill="none" stroke="#333" stroke-width="1.100"/><path d="M355.500 735v2.500M355.500 743v2.500M350 740.200h2.500M358.500 740.200h2.500" stroke="#333" stroke-width="1"/>
</svg>
<div class="lbl" style="left:369px;top:736.5px;font-size:9px;color:#cfcfcf">X:</div>
<div class="fld" style="left:376.5px;top:733.500px;width:44.500px;height:14.500px;background:#585858"></div>
<div class="lbl" style="left:432.5px;top:736.5px;font-size:9px;color:#cfcfcf">Y:</div>
<div class="fld" style="left:440.5px;top:733.500px;width:44.500px;height:14.500px;background:#585858"></div>
<div class="lbl" style="left:497px;top:736.5px;font-size:9px;color:#cfcfcf">Z:</div>
<div class="fld" style="left:504.5px;top:733.500px;width:44.500px;height:14.500px;background:#585858"></div>
<div class="abs" style="left:561px;top:732px;width:80px;height:18px;background:#4b4b4b;border:1px solid #2b2b2b;border-right-color:#5a5a5a;border-bottom-color:#5a5a5a"></div>
<div class="lbl" style="left:566px;top:736px;font-size:9.500px">栅格 = 0.0mm</div>
<div class="abs" style="left:561px;top:751px;width:80px;height:17px;background:#4b4b4b;border:1px solid #2b2b2b;border-right-color:#5a5a5a"></div>
<div class="lbl" style="left:566px;top:755.5px;font-size:9.500px">添加时间标记</div>
<div class="abs" style="left:542.500px;top:751.500px;width:16px;height:16px;background:#3c7fe0;border:1px solid #9cc4f8"></div>
<svg class="abs" style="left:543px;top:752px" width="16" height="16" viewBox="0 0 16 16"><rect x="5.500" y="3.500" width="7" height="7" rx="1" fill="none" stroke="#fff" stroke-width="1.200"/><rect x="3.500" y="5.500" width="7" height="7" rx="1" fill="#3c7fe0" stroke="#fff" stroke-width="1.200"/></svg>
<div class="abs" style="left:644px;top:732px;width:30px;height:35px;background:#474747;border-left:1px solid #555;border-right:1px solid #2e2e2e"></div>
<svg class="abs" style="left:646px;top:742px" width="26" height="14" viewBox="0 0 26 14"><circle cx="6.500" cy="7" r="3.600" fill="none" stroke="#0f0f0f" stroke-width="2"/><path d="M10 7h12M17.500 7v3.500M21 7v3" stroke="#0f0f0f" stroke-width="2"/></svg>
<div class="btn" style="left:677px;top:732px;width:50px;height:17.5px;line-height:15.5px;font-size:9.5px;">自动关键点</div>
<div class="btn" style="left:677px;top:750px;width:50px;height:17.5px;line-height:15.5px;font-size:9.5px;">设置关键点</div>
<div class="abs" style="left:729px;top:733px;width:100px;height:16px;background:linear-gradient(#fff,#dedede);border:1px solid #222;color:#000;font-size:9.500px;padding:3px 2px;white-space:nowrap">选定对象</div>
<svg class="abs" style="left:729px;top:750px" width="19" height="17" viewBox="0 0 19 17"><path d="M2 13c2.500 0 3-10 5.500-10s3 10 5.500 10 2-4 3.500-6" fill="none" stroke="#e02a2a" stroke-width="1.300"/><path d="M17 14.500l-2.500 2.500h2.500z" fill="#ddd"/></svg>
<div class="btn" style="left:750px;top:750px;width:72.5px;height:17.5px;line-height:15.5px;font-size:9.5px;">关键点过滤器...</div>
<svg class="abs" style="left:828px;top:753px" width="16" height="12" viewBox="0 0 16 12"><path d="M1.500 1.500v8M14.500 1.500v8" stroke="#e8e8e8" stroke-width="1.300"/><path d="M7.500 1.500v8l-5-4zM8.500 1.500v8l5-4z" fill="#e8e8e8"/></svg>
<div class="fld" style="left:849px;top:751.500px;width:48.500px;height:15px;font-size:9.500px;padding:2px 3px;background:#585858">0</div>
<div class="spin" style="left:899px;top:753.500px;transform:scale(.85)"></div>
<svg class="abs" style="left:905px;top:728px" width="95" height="39" viewBox="905 728 95 39">
<rect x="912" y="752.500" width="12" height="12" fill="#e9edf2"/><rect x="913" y="753.500" width="5" height="5" fill="#2f56b0"/><rect x="919" y="753.500" width="4" height="5" fill="#9ab"/><circle cx="921" cy="761.500" r="3" fill="#f4f4f4" stroke="#345" stroke-width=".8"/>
<rect x="929.500" y="753" width="9.500" height="9.500" fill="none" stroke="#e6e6e6" stroke-width="1" stroke-dasharray="2 1.400"/><rect x="936" y="759.500" width="4" height="4" fill="#f2f2f2"/>
<path d="M948.500 758v-4.500M951 757v-5.500M953.500 757v-5M956 758v-4M948.500 758c-1.500-1.500-2.500-1-1.500.5l2.500 4.500c1 1.500 5 1.500 6 0l1-3v-2.500" fill="none" stroke="#f2f2f2" stroke-width="1.500" stroke-linecap="round" stroke-linejoin="round"/><path d="M948.500 757.500h8v4l-1.500 3h-5z" fill="#f2f2f2"/>
<path d="M966 763.500a6 4 0 1 0 8-5" fill="none" stroke="#e6e6e6" stroke-width="1.100"/><rect x="967.500" y="755" width="6" height="6" fill="#4d9a4d" stroke="#cfe8cf" stroke-width=".7"/><path d="M978 764l-2.500 2.500h2.500z" fill="#ddd"/>
<rect x="982" y="752.500" width="12" height="11.500" fill="#f0f0f0"/><rect x="983.500" y="754" width="7" height="6.500" fill="#3a3a3a"/><path d="M986 756.500l5 5M991.500 758.500v3.500h-3.500" fill="none" stroke="#111" stroke-width="1.200"/>
<g fill="none" stroke="#e2e2e2" stroke-width="1"><path d="M965.500 736v-3h3M974 733h3v3M977 743v3h-3M968.500 746h-3v-3"/></g><rect x="968" y="736" width="6.500" height="6.500" fill="#5aa05a" stroke="#cfe8cf" stroke-width=".6"/><path d="M979.500 745.500l-2.500 2.500h2.500z" fill="#ddd"/>
<rect x="983" y="733" width="6" height="6" fill="#5aa05a" stroke="#cfe8cf" stroke-width=".6"/><rect x="990" y="732" width="6" height="6" fill="#e8e8e8"/><rect x="983" y="740.500" width="6" height="5.500" fill="#e8e8e8"/><rect x="990" y="739.500" width="6" height="6" fill="#5aa05a" stroke="#cfe8cf" stroke-width=".6"/><path d="M999 745.500l-2.500 2.500h2.500z" fill="#ddd"/>
</svg>
<!--BOTTOM_END-->
<!--BLOB_START-->
<div class="abs" style="left:770px;top:720px;font-size:20px;font-weight:bold;color:#fff;letter-spacing:1px;line-height:22px;text-shadow:0 -1px 2px #2a2a2a">jing</div>
<svg class="abs" style="left:740px;top:655px" width="240" height="100" viewBox="740 655 240 100">
<path d="M853 667C862.5 665.3 852.5 673.7 857 675C861.5 676.3 871.5 674.6 880 675C888.5 675.4 901.3 676.5 908 677.5C914.7 678.5 916.0 679.7 920 681C924.0 682.3 927.2 683.8 932 685.5C936.8 687.2 944.3 689.1 949 691C953.7 692.9 957.2 694.7 960 697C962.8 699.3 964.2 701.9 965.5 705C966.8 708.1 967.2 712.2 967.5 715.5C967.8 718.8 967.6 722.2 967 725C966.4 727.8 965.8 729.7 964 732C962.2 734.3 959.3 737.0 956 739C952.7 741.0 948.7 742.6 944 744C939.3 745.4 934.0 746.7 928 747.5C922.0 748.3 917.7 748.7 908 749C898.3 749.3 882.0 749.6 870 749.5C858.0 749.4 844.0 748.9 836 748.5C828.0 748.1 825.3 748.1 822 747C818.7 745.9 817.8 743.9 816 742C814.2 740.1 812.8 737.6 811.5 735.5C810.2 733.4 809.9 731.4 808 729.5C806.1 727.6 803.8 725.2 800 724C796.2 722.8 790.0 722.8 785 722.5C780.0 722.2 774.2 722.5 770 722C765.8 721.5 762.7 720.8 760 719.5C757.3 718.2 755.5 716.4 754 714C752.5 711.6 751.8 708.3 751 705C750.2 701.7 749.8 696.7 749.5 694C749.2 691.3 740.6 690.5 749 689C757.4 687.5 782.7 688.7 800 685C817.3 681.3 843.5 668.7 853 667z" fill="#393939"/>
<path d="M857.200 675.200v-6.400a6.600 6.800 0 0 1 13.200 0v6.400z" fill="#e4e4e4"/>
</svg>
<!--BLOB_END-->
</div>
</body>
</html>
